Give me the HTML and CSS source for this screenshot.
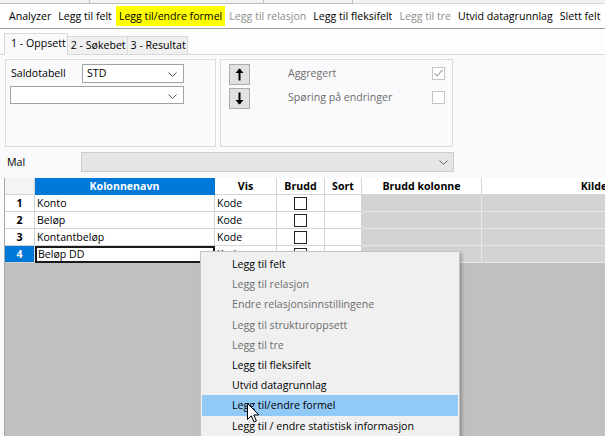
FILE: index.html
```html
<!DOCTYPE html>
<html lang="no">
<head>
<meta charset="utf-8">
<title>Analyzer</title>
<link rel="stylesheet" href="styles.css">
</head>
<body>
<div class="app">
  <div class="topstrip">
    <span class="seg s1"></span><span class="seg s2"></span><span class="seg s3"></span><span class="seg s4"></span>
  </div>
  <div class="toolbar">
    <span class="tb">Analyzer</span>
    <span class="tb">Legg til felt</span>
    <span class="tb hl">Legg til/endre formel</span>
    <span class="tb dis">Legg til relasjon</span>
    <span class="tb">Legg til fleksifelt</span>
    <span class="tb dis">Legg til tre</span>
    <span class="tb">Utvid datagrunnlag</span>
    <span class="tb">Slett felt</span>
  </div>
  <div class="tabs">
    <span class="tab active">1 - Oppsett</span>
    <span class="tab">2 - Søkebet</span>
    <span class="tab">3 - Resultat</span>
  </div>
  <div class="page">
    <div class="boxes">
      <div class="group g1">
        <div class="frow">
          <span class="lbl">Saldotabell</span>
          <div class="combo c1"><span>STD</span><svg class="chev" width="9" height="5" viewBox="0 0 9 5"><path d="M0.5 0.5 L4.5 4.5 L8.5 0.5" fill="none" stroke="#555" stroke-width="1"/></svg></div>
        </div>
        <div class="combo c2"><span></span><svg class="chev" width="9" height="5" viewBox="0 0 9 5"><path d="M0.5 0.5 L4.5 4.5 L8.5 0.5" fill="none" stroke="#555" stroke-width="1"/></svg></div>
      </div>
      <div class="group g2">
        <div class="btn"><svg width="9" height="13" viewBox="0 0 9 13"><path d="M4.5 1 L4.5 12.5" stroke="#000" stroke-width="2"/><path d="M0.5 5 L4.5 0.5 L8.5 5 Z" fill="#000"/></svg></div>
        <span class="opt">Aggregert</span>
        <span class="cb dis checked"><svg width="11" height="11" viewBox="0 0 11 11"><path d="M1.5 5.5 L4 8 L9.5 2" fill="none" stroke="#a8a8a8" stroke-width="1.2"/></svg></span>
        <div class="btn"><svg width="9" height="13" viewBox="0 0 9 13"><path d="M4.5 0.5 L4.5 12" stroke="#000" stroke-width="2"/><path d="M0.5 8 L4.5 12.5 L8.5 8 Z" fill="#000"/></svg></div>
        <span class="opt">Spøring på endringer</span>
        <span class="cb dis"></span>
      </div>
    </div>
    <div class="malrow">
      <span class="mal">Mal</span>
      <div class="combo cmal"><span></span><svg class="chev" width="9" height="5" viewBox="0 0 9 5"><path d="M0.5 0.5 L4.5 4.5 L8.5 0.5" fill="none" stroke="#666" stroke-width="1"/></svg></div>
    </div>
    <div class="gridwrap">
      <div class="grid">
        <div class="hc corner"></div>
        <div class="hc sel">Kolonnenavn</div>
        <div class="hc">Vis</div>
        <div class="hc">Brudd</div>
        <div class="hc">Sort</div>
        <div class="hc">Brudd kolonne</div>
        <div class="hc">Kilde</div>

        <div class="rh">1</div>
        <div class="c">Konto</div>
        <div class="c">Kode</div>
        <div class="c ctr"><span class="gcb"></span></div>
        <div class="c"></div>
        <div class="c gray"></div>
        <div class="c gray"></div>

        <div class="rh">2</div>
        <div class="c">Beløp</div>
        <div class="c">Kode</div>
        <div class="c ctr"><span class="gcb"></span></div>
        <div class="c"></div>
        <div class="c gray"></div>
        <div class="c gray"></div>

        <div class="rh">3</div>
        <div class="c">Kontantbeløp</div>
        <div class="c">Kode</div>
        <div class="c ctr"><span class="gcb"></span></div>
        <div class="c"></div>
        <div class="c gray"></div>
        <div class="c gray"></div>

        <div class="rh sel">4</div>
        <div class="c edit">Beløp DD</div>
        <div class="c">Kode</div>
        <div class="c ctr"><span class="gcb"></span></div>
        <div class="c"></div>
        <div class="c gray"></div>
        <div class="c gray"></div>
      </div>
    </div>
  </div>

  <div class="menu">
    <div class="mi">Legg til felt</div>
    <div class="mi dis">Legg til relasjon</div>
    <div class="mi dis">Endre relasjonsinnstillingene</div>
    <div class="mi dis">Legg til strukturoppsett</div>
    <div class="mi dis">Legg til tre</div>
    <div class="mi">Legg til fleksifelt</div>
    <div class="mi">Utvid datagrunnlag</div>
    <div class="mi hot">Legg til/endre formel</div>
    <div class="mi">Legg til / endre statistisk informasjon</div>
  </div>

  <svg class="cursor" width="13" height="21" viewBox="0 0 13 21"><path d="M0.5 0.5 L0.5 16.5 L4.3 12.8 L7 19 L9.4 18 L6.8 11.9 L11.8 11.9 Z" fill="#fff" stroke="#000" stroke-width="1" stroke-linejoin="round"/></svg>
</div>
</body>
</html>
```

FILE: styles.css
```css
* { box-sizing: border-box; }
html, body { margin: 0; padding: 0; }
body {
  width: 605px;
  height: 436px;
  overflow: hidden;
  background: #fff;
  font-family: "Open Sans", "Noto Sans", "DejaVu Sans", sans-serif;
  font-size: 10.6px;
  color: #000;
}
.app { position: relative; width: 605px; height: 436px; overflow: hidden; }

.topstrip { display: flex; height: 4px; background: #f3f3f3; }
.seg { height: 4px; border-bottom: 1px solid #bdbdbd; border-right: 1px solid #bdbdbd; }
.s1 { width: 90px; }
.s2 { width: 174px; }
.s3 { width: 89px; }
.s4 { flex: 1; border-right: none; border-bottom-color: #d6d6d6; }

.toolbar {
  display: flex;
  gap: 1px;
  height: 25px;
  padding: 2px 0 0 6px;
  background: #fff;
  border-bottom: 1px solid #a0a0a0;
  box-shadow: 0 1px 0 #d4d4d4;
  white-space: nowrap;
}
.tb { height: 20px; line-height: 20px; padding: 0 3px; }
.tb.hl { background: #ffff00; }
.tb.dis { color: #8e8e8e; }

.tabs {
  display: flex;
  height: 25px;
  padding: 3px 0 0 4px;
  background: #fdfdfd;
  align-items: flex-end;
}
.tab {
  height: 18px;
  line-height: 16px;
  padding: 0 1px 0 3px;
  background: #f0f0f0;
  border: 1px solid #d9d9d9;
  border-bottom: none;
  margin-left: -1px;
  white-space: nowrap;
}
.tab.active {
  height: 22px;
  line-height: 18px;
  padding: 0 1px 0 6px;
  background: #fafafc;
  margin-left: 0;
  position: relative;
  z-index: 1;
  margin-bottom: -1px;
}

.page {
  background: #fafafc;
  border-top: 1px solid #d9d9d9;
  padding-top: 4px;
  height: 382px;
}
.boxes { display: flex; gap: 4px; margin-left: 5px; }
.group { border: 1px solid #dcdcdc; height: 88px; }
.g1 { width: 211px; padding: 3px 0 0 4px; }
.frow { display: flex; align-items: center; height: 20px; }
.lbl { width: 72px; padding-left: 1px; }
.combo {
  position: relative;
  height: 19px;
  background: #fff;
  border: 1px solid #a2a2a2;
  padding-left: 4px;
  line-height: 17px;
}
.combo .chev { position: absolute; right: 6px; top: 7px; }
.c1 { width: 102px; }
.c2 { width: 174px; margin-top: 3px; height: 18px; }

.g2 {
  width: 233px;
  padding: 4px 0 0 8px;
  display: grid;
  grid-template-columns: 21px 1fr 13px;
  grid-template-rows: 24px 21px;
  column-gap: 38px;
  align-items: start;
  align-content: start;
}
.btn {
  width: 21px;
  height: 21px;
  background: #e1e1e1;
  border: 1px solid #adadad;
  display: flex;
  align-items: center;
  justify-content: center;
}
.opt { color: #6d6d6d; line-height: 21px; margin-top: -1px; }
.cb {
  width: 13px;
  height: 13px;
  border: 1px solid #c4c4c4;
  background: #fff;
  margin-top: 3px;
  margin-left: -7px;
  display: flex;
  align-items: center;
  justify-content: center;
}

.malrow { display: flex; align-items: center; height: 20px; margin-top: 5px; }
.mal { width: 81px; padding-left: 7px; }
.cmal { width: 373px; height: 20px; background: #e5e5e5; border-color: #cccccc; }
.cmal .chev { right: 5px; }

.gridwrap {
  margin: 6px 0 0 4px;
  height: 262px;
  background: #c0c0c0;
  border-left: 1px solid #a8a8a8;
  overflow: hidden;
}
.grid {
  display: grid;
  width: 703px;
  grid-template-columns: 30px 180px 62px 48px 37px 120px 225px;
  grid-auto-rows: 17px;
}
.hc, .rh, .c {
  border-right: 1px solid #d4d4d4;
  border-bottom: 1px solid #d4d4d4;
  white-space: nowrap;
  overflow: hidden;
  line-height: 16px;
}
.hc { background: #fff; font-weight: 700; text-align: center; }
.hc.corner { background: #f4f4f4; }
.hc.sel { background: #0078d7; color: #fff; border-color: #0078d7; }
.rh { background: #fff; font-weight: 700; text-align: center; }
.rh.sel { background: #0078d7; color: #fff; }
.c { background: #fff; padding-left: 2px; }
.c.ctr { display: flex; align-items: center; justify-content: center; padding-left: 0; }
.gcb { width: 13px; height: 13px; border: 1px solid #222; background: #fff; }
.c.gray { background: #d3d3d3; border-color: #e6e6e6; }
.c.edit { border: 2px solid #1a1a1a; line-height: 13px; padding-left: 1px; }

.menu {
  position: absolute;
  left: 200px;
  top: 251px;
  width: 260px;
  height: 220px;
  background: #f0f0f0;
  border: 1px solid #c4c4c4;
  padding: 2px 1px 0 1px;
  box-shadow: 2px 2px 3px rgba(0,0,0,0.25);
}
.mi { height: 20.2px; line-height: 20px; padding-left: 30px; white-space: nowrap; }
.mi.dis { color: #6d6d6d; }
.mi.hot { background: #91c9f7; }

.cursor { position: absolute; left: 247px; top: 403px; }
```
